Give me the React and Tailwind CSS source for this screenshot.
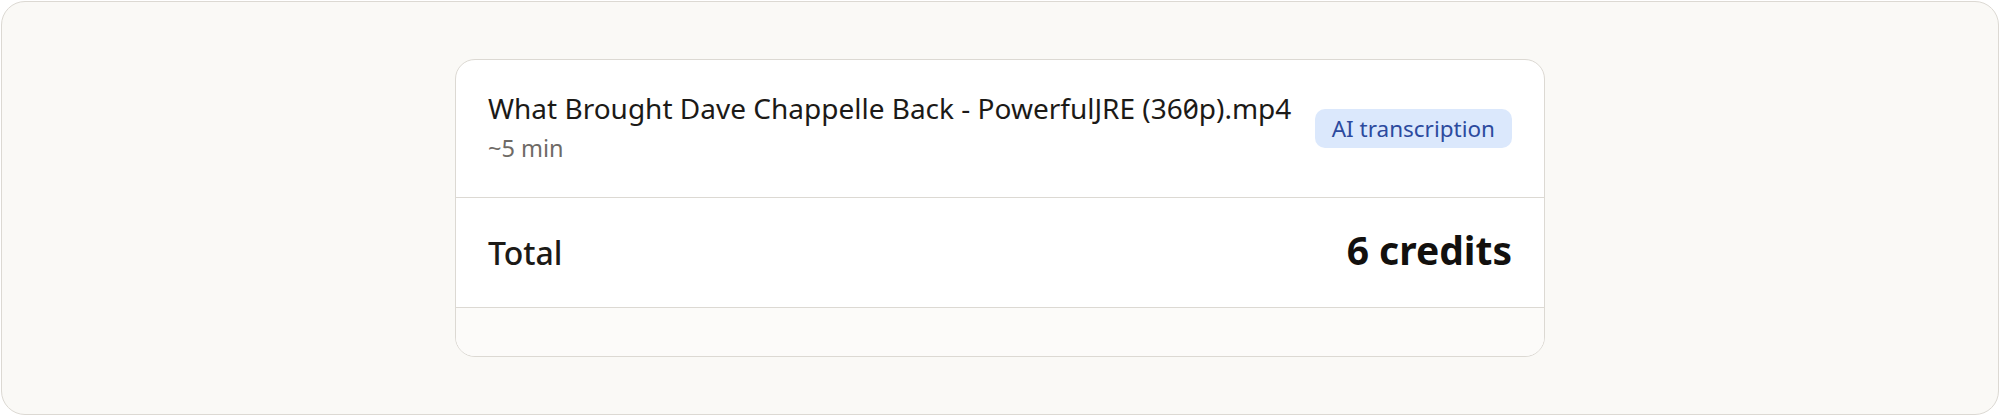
export default function App() {
  return (
    <div className="ml-px mt-px w-[1998px] rounded-[24px] border border-[#dcd9d3] bg-[#faf9f6] py-[57px] font-['Noto_Sans',sans-serif]">
      <div className="mx-auto w-[1090px] overflow-hidden rounded-[20px] border border-[#dcd9d3] bg-white">
        <div className="flex h-[137px] justify-between gap-4 px-8">
          <div className="min-w-0 self-start pt-[28px]">
            <div className="whitespace-nowrap text-[28px] leading-[40px] text-[#1c1a17] slashed-zero">
              What Brought Dave Chappelle Back - PowerfulJRE (360p).mp4
            </div>
            <div className="mt-[5px] text-[23.5px] leading-[30px] text-[#6e6a66]">~5 min</div>
          </div>
          <div className="flex h-[39px] shrink-0 items-center self-center whitespace-nowrap rounded-[10px] bg-[#dbe8fc] px-[17px] text-[22.5px] text-[#2c4a9e]">
            AI transcription
          </div>
        </div>
        <div className="flex h-[110px] items-baseline justify-between border-t border-[#dcd9d3] px-8 pt-[25px]">
          <div className="text-[32px] font-medium leading-[44px] text-[#1c1a17]">Total</div>
          <div className="text-[39px] font-bold leading-[54px] text-[#12100e]">6 credits</div>
        </div>
        <div className="h-[49px] border-t border-[#dcd9d3] bg-[#fcfbf9]"></div>
      </div>
    </div>
  );
}
